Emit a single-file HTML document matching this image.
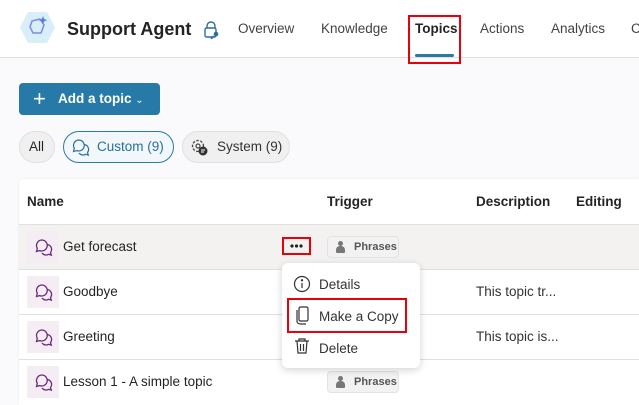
<!DOCTYPE html>
<html><head><meta charset="utf-8"><style>
*{box-sizing:border-box;margin:0;padding:0}
html,body{width:639px;height:405px;overflow:hidden}
body{background:#fafafc;font-family:"Liberation Sans",sans-serif;color:#242424;position:relative}
.a{position:absolute;white-space:nowrap}
.nav{font-size:13.5px;color:#424242;top:21px}
.th{font-size:13.5px;font-weight:bold;top:194px;color:#242424}
.row{position:absolute;left:19px;width:620px;height:45px;border-top:1px solid #e0e0e0;background:#fff}
.ic{position:absolute;left:8px;top:6px;width:32px;height:32px;background:#f4eef4}
.nm{position:absolute;left:44px;top:14px;font-size:13.5px}
.ds{position:absolute;left:457px;top:14px;font-size:13.5px;color:#333}
.ph{position:absolute;left:308px;top:11px;width:72px;height:22px;background:#f2f2f2;border:1px solid #e3e3e3;border-radius:4px;font-size:11px;font-weight:bold;color:#555;padding:4px 0 0 26px;overflow:hidden}
.ph:before{content:"";position:absolute;left:8px;top:9px;width:9px;height:7px;border-radius:4px 4px 1px 1px;background:#777}
.ph:after{content:"";position:absolute;left:10px;top:4px;width:5px;height:5px;border-radius:50%;background:#777}
.mi{position:absolute;left:319px;font-size:13.5px;color:#333}
</style></head><body>
<div class="a" style="left:0;top:0;width:639px;height:58px;background:#fff;border-bottom:1px solid #e0e0e0"></div>
<svg class="a" style="left:19px;top:11px" width="37" height="33" viewBox="0 0 37 33"><polygon points="9,1 28,1 36,16.5 28,32 9,32 1,16.5" fill="#d8effa"/><polygon points="13,10 21,8 25,14 22,22 14,22 11,16" fill="none" stroke="#7d8be0" stroke-width="1.5"/><path d="M24 5 l1.2 3 3 1.2 -3 1.2 -1.2 3 -1.2 -3 -3 -1.2 3 -1.2z" fill="#5a7fd8"/></svg>
<div class="a" style="left:67px;top:19px;font-size:18px;font-weight:bold;color:#242424">Support Agent</div>
<svg class="a" style="left:203px;top:21px" width="18" height="18" viewBox="0 0 18 18"><path d="M4 7 V5 a4 4 0 0 1 8 0 V7" fill="none" stroke="#2b6f9a" stroke-width="1.4"/><rect x="2" y="7" width="11" height="9" rx="1.5" fill="none" stroke="#2b6f9a" stroke-width="1.4"/><circle cx="13" cy="13" r="2.3" fill="#2b6f9a"/><path d="M11 15 l-3 3" stroke="#2b6f9a" stroke-width="1.6"/></svg>
<div class="a nav" style="left:238px">Overview</div>
<div class="a nav" style="left:321px">Knowledge</div>
<div class="a nav" style="left:415px;font-weight:bold;color:#242424">Topics</div>
<div class="a nav" style="left:480px">Actions</div>
<div class="a nav" style="left:551px">Analytics</div>
<div class="a nav" style="left:631px">C</div>
<div class="a" style="left:415px;top:54px;width:39px;height:3px;background:#2b7aa3;border-radius:2px"></div>
<div class="a" style="left:408px;top:15px;width:53px;height:49px;border:2px solid #e8000b"></div>
<div class="a" style="left:19px;top:83px;width:141px;height:32px;background:#2779a7;border-radius:4px;color:#fff;font-size:13.5px;font-weight:bold;padding:8px 0 0 39px">Add a topic <span style="font-weight:normal;font-size:10px">&#8964;</span></div>
<div class="a" style="left:33px;top:91px;color:#fff;font-size:22px;line-height:16px;font-weight:300">+</div>
<div class="a" style="left:19px;top:131px;width:36px;height:32px;border-radius:16px;background:#f0f0f0;border:1px solid #e0e0e0;font-size:13.5px;padding:7px 0 0 9px">All</div>
<div class="a" style="left:63px;top:131px;width:111px;height:32px;border-radius:16px;background:#f1f7fb;border:1px solid #2b7aa3;font-size:13.5px;padding:7px 0 0 33px;color:#2b6f9a">Custom (9)</div>
<svg class="a" style="left:72px;top:138px" width="18" height="18" viewBox="0 0 18 18"><path d="M7 2a5.5 5.5 0 0 0-4.7 8.3L1.5 13.5 4.7 12.6A5.5 5.5 0 1 0 7 2z" fill="none" stroke="#2b6f9a" stroke-width="1.2"/><path d="M12.5 6.5a5 5 0 0 1 3 8l.8 2.6-2.7-.8A5 5 0 0 1 7 15" fill="none" stroke="#2b6f9a" stroke-width="1.2"/></svg>
<div class="a" style="left:182px;top:131px;width:108px;height:32px;border-radius:16px;background:#f0f0f0;border:1px solid #e0e0e0;font-size:13.5px;padding:7px 0 0 34px;color:#333">System (9)</div>
<svg class="a" style="left:190px;top:138px" width="19" height="19" viewBox="0 0 19 19"><circle cx="8" cy="8" r="5.5" fill="none" stroke="#444" stroke-width="1.3" stroke-dasharray="2.5 1.5"/><circle cx="8" cy="8" r="2" fill="none" stroke="#444" stroke-width="1.2"/><circle cx="13" cy="13" r="4.5" fill="#333"/><path d="M11 12h4M11 14h3" stroke="#fff" stroke-width="1"/></svg>
<div class="a" style="left:19px;top:179px;width:620px;height:226px;background:#fff;border-radius:4px 0 0 0;box-shadow:0 0 2px rgba(0,0,0,.08)"></div>
<div class="a th" style="left:27px">Name</div>
<div class="a th" style="left:327px">Trigger</div>
<div class="a th" style="left:476px">Description</div>
<div class="a th" style="left:576px">Editing</div>
<div class="row" style="top:224px;background:#f3f2f1"><div class="ic"></div><div class="nm">Get forecast</div><div class="ph">Phrases</div></div>
<div class="row" style="top:269px"><div class="ic"></div><div class="nm">Goodbye</div><div class="ds">This topic tr...</div></div>
<div class="row" style="top:314px"><div class="ic"></div><div class="nm">Greeting</div><div class="ds">This topic is...</div></div>
<div class="row" style="top:359px"><div class="ic"></div><div class="nm">Lesson 1 - A simple topic</div><div class="ph">Phrases</div></div>
<svg class="a" style="left:34px;top:237px" width="20" height="168" viewBox="0 0 20 168">
<g fill="none" stroke="#6b2a7a" stroke-width="1.3">
<g><path d="M8 3a5.5 5.5 0 0 0-4.7 8.3L2.5 14.5 5.7 13.6A5.5 5.5 0 1 0 8 3z"/><path d="M13.5 7.5a5 5 0 0 1 3 8l.8 2.6-2.7-.8A5 5 0 0 1 8 16"/></g>
<g transform="translate(0,45)"><path d="M8 3a5.5 5.5 0 0 0-4.7 8.3L2.5 14.5 5.7 13.6A5.5 5.5 0 1 0 8 3z"/><path d="M13.5 7.5a5 5 0 0 1 3 8l.8 2.6-2.7-.8A5 5 0 0 1 8 16"/></g>
<g transform="translate(0,90)"><path d="M8 3a5.5 5.5 0 0 0-4.7 8.3L2.5 14.5 5.7 13.6A5.5 5.5 0 1 0 8 3z"/><path d="M13.5 7.5a5 5 0 0 1 3 8l.8 2.6-2.7-.8A5 5 0 0 1 8 16"/></g>
<g transform="translate(0,135)"><path d="M8 3a5.5 5.5 0 0 0-4.7 8.3L2.5 14.5 5.7 13.6A5.5 5.5 0 1 0 8 3z"/><path d="M13.5 7.5a5 5 0 0 1 3 8l.8 2.6-2.7-.8A5 5 0 0 1 8 16"/></g>
</g></svg>
<div class="a" style="left:282px;top:237px;width:29px;height:18px;border:2px solid #e8000b;background:#f3f2f1"></div>
<svg class="a" style="left:282px;top:237px" width="29" height="18" viewBox="0 0 29 18"><circle cx="10" cy="9" r="1.6" fill="#222"/><circle cx="14.5" cy="9" r="1.6" fill="#222"/><circle cx="19" cy="9" r="1.6" fill="#222"/></svg>
<div class="a" style="left:282px;top:263px;width:138px;height:105px;background:#fff;border-radius:6px;box-shadow:0 2px 8px rgba(0,0,0,.18)"></div>
<div class="a mi" style="top:277px">Details</div>
<div class="a mi" style="top:309px">Make a Copy</div>
<div class="a mi" style="top:341px">Delete</div>
<svg class="a" style="left:293px;top:274px" width="20" height="90" viewBox="0 0 20 90" fill="none" stroke="#333" stroke-width="1.2">
<circle cx="9" cy="10" r="7.5"/><path d="M9 9v5"/><circle cx="9" cy="6.3" r=".6" fill="#333"/>
<rect x="6" y="33" width="9" height="14" rx="1.5"/><path d="M4 36v11a3 3 0 0 0 3 3h6"/>
<path d="M2 67h14M6 67v-2h6v2M4 67l1 12h8l1-12M7.5 70v7M10.5 70v7"/>
</svg>
<div class="a" style="left:287px;top:298px;width:120px;height:35px;border:2px solid #e8000b"></div>
</body></html>
